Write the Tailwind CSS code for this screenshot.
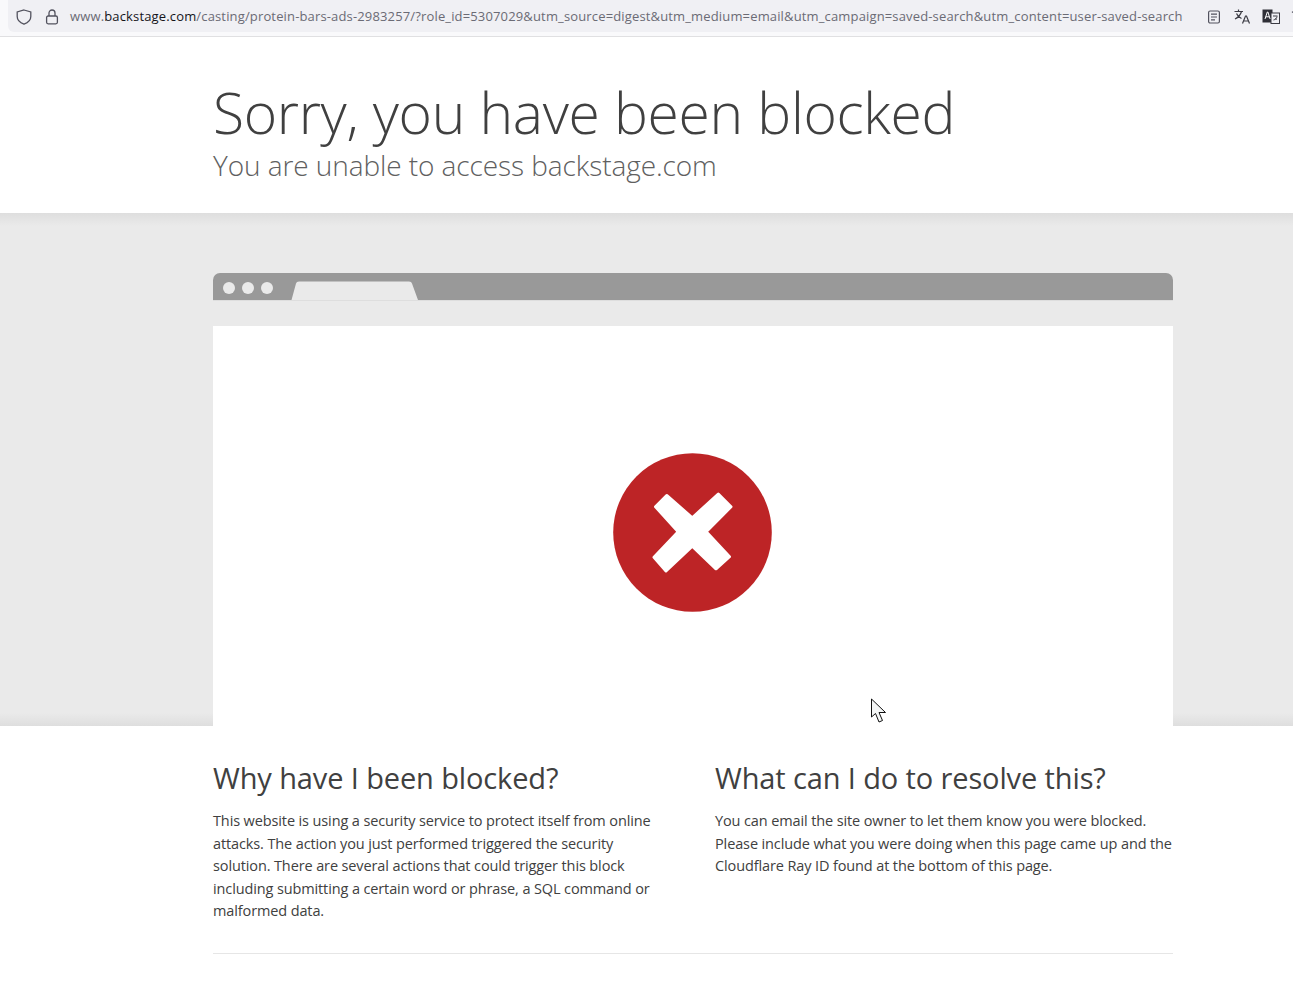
<!doctype html>
<html lang="en">
<head>
<meta charset="utf-8">
<script src="https://cdn.jsdelivr.net/npm/@tailwindcss/browser@4"></script>
<title>Blocked</title>
</head>
<body class="bg-white font-['Open_Sans',sans-serif] text-[#404040] overflow-hidden h-[989px]">
<div class="relative h-[37px] bg-[#f9f9fb] border-b border-[#e0e0e2] overflow-hidden">
  <div class="absolute left-[8px] top-0 right-0 h-[32px] bg-[#f0f0f4] rounded-bl-md"></div>
  <div class="relative flex items-center h-[33px]">
    <svg class="ml-[16px] shrink-0 w-[16px] h-[16px]" viewBox="0 0 16 16" fill="none" stroke="#52525e" stroke-width="1.3"><path d="M8 1 14.800 3v4.500c0 3.800-2.800 6.200-6.800 7.700-4-1.500-6.800-3.900-6.800-7.700V3z"/></svg>
    <svg class="ml-[12px] shrink-0 w-[16px] h-[16px]" viewBox="0 0 16 16" fill="none" stroke="#52525e" stroke-width="1.300"><rect x="2.600" y="7" width="10.800" height="7.800" rx="1.500"/><path d="M5 7V4a3 3 0 0 1 6 0V7"/></svg>
    <div class="ml-[10px] w-[1112px] shrink-0 whitespace-nowrap pt-[1px] text-[13px] tracking-[0.15px] text-[#6b6b75]">www.<span class="text-[#15141a]">backstage.com</span>/casting/protein-bars-ads-2983257/?role_id=5307029&amp;utm_source=digest&amp;utm_medium=email&amp;utm_campaign=saved-search&amp;utm_content=user-saved-search</div>
    <svg class="ml-[25px] shrink-0 w-[14px] h-[14px]" viewBox="0 0 14 14" fill="none" stroke="#52525e" stroke-width="1.200"><rect x="1.600" y="1" width="10.800" height="12" rx="1.500"/><path d="M4 4.200h6M4 7h6M4 9.800h4"/></svg>
    <svg class="ml-[13px] shrink-0 w-[17px] h-[15px]" viewBox="0 0 17 15" fill="none" stroke="#3c3c44" stroke-width="1.200"><path d="M0.500 2.500h8.500M4.500 0.500v2M7.500 2.500C6.500 6 4 8.500 1 10M2.500 4.500c1 2.500 3 4 5 5M8.500 14.500l3-7.500h1l3 7.500M9.600 12h5"/></svg>
    <svg class="ml-[11px] shrink-0 w-[18px] h-[16px]" viewBox="0 0 18 16"><rect x="0.500" y="0.500" width="10" height="13" fill="#2f2f36"/><rect x="9" y="4" width="8.500" height="10.500" fill="#f0f0f4" stroke="#3c3c44"/><path d="M3 10l2.300-7h.6l2.200 7M3.800 7.800h3.400" stroke="#fff" fill="none"/><path d="M11 7h4.500M13 9.500c1 .8 1.500.8 2 .8M15 7.500c-.3 2-1.500 3-3.500 3.500" stroke="#3c3c44" fill="none"/></svg>
    <svg class="ml-[11px] shrink-0 w-[10px] h-[14px]" viewBox="0 0 10 14" fill="none" stroke="#52525e" stroke-width="1.200"><path d="M1 2.500c2-1.500 5-1.500 7 0L4.500 7"/></svg>
  </div>
</div>

<header class="h-[176px] pl-[213px] pt-[38px]">
  <h1 class="text-[57px] leading-[74px] font-light tracking-[-0.33px] text-[#404040] whitespace-nowrap">Sorry, you have been blocked</h1>
  <h2 class="text-[28px] leading-[34px] font-light tracking-[-0.08px] text-[#606060] whitespace-nowrap -mt-[1px]">You are unable to access backstage.com</h2>
</header>

<section class="relative h-[513px] bg-[#eaeaea] px-[213px] pt-[60px]">
  <div class="absolute inset-x-0 top-0 h-[13px] bg-gradient-to-b from-[#dedede] to-[#eaeaea]"></div>
  <div class="absolute inset-x-0 bottom-0 h-[13px] bg-gradient-to-b from-[#eaeaea] to-[#dedede]"></div>
  <div class="relative h-[28px] bg-[#999999] rounded-t-[7px] border-b border-[#dedede] w-[960px]">
    <div class="flex gap-[7px] pl-[10px] pt-[9px]">
      <span class="w-[12px] h-[12px] rounded-full bg-[#eaeaea]"></span>
      <span class="w-[12px] h-[12px] rounded-full bg-[#eaeaea]"></span>
      <span class="w-[12px] h-[12px] rounded-full bg-[#eaeaea]"></span>
    </div>
    <svg class="absolute left-[78px] top-[8px]" width="128" height="19" viewBox="0 0 128 19"><path d="M0.500 19 5 2.500Q5.500 0.500 8 0.500H118Q120.500 0.500 121 2.500L127 19Z" fill="#eaeaea"/></svg>
  </div>
  <div class="relative mt-[25px] w-[960px] h-[400px] bg-white">
    <svg class="absolute left-[400px] top-[127px]" width="159" height="159" viewBox="0 0 159 159">
      <circle cx="79.500" cy="79.500" r="79.300" fill="#bd2426"/>
      <polygon points="42.500,53.700 53.700,42.500 79.300,64.800 105.300,41 118,53.700 93.200,78.700 116.500,103.700 103,115.800 79.300,93.200 53,118 41,104.300 65.200,78.700" fill="#fff" stroke="#fff" stroke-width="3" stroke-linejoin="round"/>
    </svg>
    <svg class="absolute left-[657px] top-[372px]" width="17" height="26" viewBox="0 0 17 26"><path d="M1.500 1V19L5.500 15.500 9 24 12.500 22.500 9 14.500H15.500Z" fill="#f4f6f6" stroke="#111" stroke-width="1"/></svg>
  </div>
</section>

<section class="px-[213px] pt-[30px]">
  <div class="grid grid-cols-[455px_458px] gap-x-[47px] w-[960px] pb-[30px] border-b border-[#e6e6e6]">
    <div>
      <h2 class="text-[29px] leading-[43px] text-[#404040] tracking-[-0.12px] mb-[11px] whitespace-nowrap">Why have I been blocked?</h2>
      <p class="text-[14.500px] leading-[22.500px] tracking-[-0.12px] text-[#404040]">This website is using a security service to protect itself from online attacks. The action you just performed triggered the security solution. There are several actions that could trigger this block including submitting a certain word or phrase, a SQL command or malformed data.</p>
    </div>
    <div>
      <h2 class="text-[29px] leading-[43px] text-[#404040] tracking-[-0.12px] mb-[11px] whitespace-nowrap">What can I do to resolve this?</h2>
      <p class="text-[14.500px] leading-[22.500px] tracking-[-0.12px] text-[#404040]">You can email the site owner to let them know you were blocked. Please include what you were doing when this page came up and the Cloudflare Ray ID found at the bottom of this page.</p>
    </div>
  </div>
</section>
</body>
</html>
